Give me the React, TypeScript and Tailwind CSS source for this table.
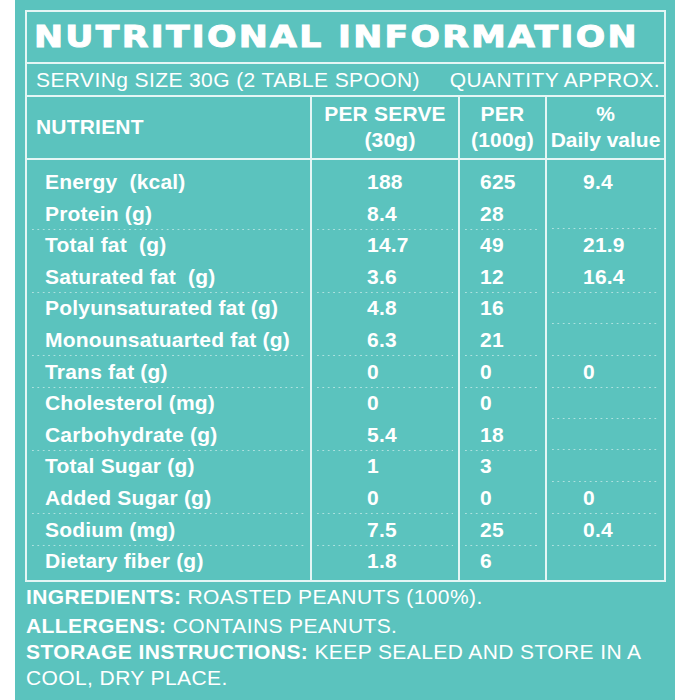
import React from "react";

type Row = { name: string; serve: string; per100: string; dv: string };

const rows: Row[] = [
  { name: "Energy  (kcal)", serve: "188", per100: "625", dv: "9.4" },
  { name: "Protein (g)", serve: "8.4", per100: "28", dv: "" },
  { name: "Total fat  (g)", serve: "14.7", per100: "49", dv: "21.9" },
  { name: "Saturated fat  (g)", serve: "3.6", per100: "12", dv: "16.4" },
  { name: "Polyunsaturated fat (g)", serve: "4.8", per100: "16", dv: "" },
  { name: "Monounsatuarted fat (g)", serve: "6.3", per100: "21", dv: "" },
  { name: "Trans fat (g)", serve: "0", per100: "0", dv: "0" },
  { name: "Cholesterol (mg)", serve: "0", per100: "0", dv: "" },
  { name: "Carbohydrate (g)", serve: "5.4", per100: "18", dv: "" },
  { name: "Total Sugar (g)", serve: "1", per100: "3", dv: "" },
  { name: "Added Sugar (g)", serve: "0", per100: "0", dv: "0" },
  { name: "Sodium (mg)", serve: "7.5", per100: "25", dv: "0.4" },
  { name: "Dietary fiber (g)", serve: "1.8", per100: "6", dv: "" },
];

function Dots() {
  return (
    <div className="h-px mx-[5px] bg-[linear-gradient(to_right,rgba(255,255,255,0.5)_1.5px,transparent_1.5px)] bg-[length:5.4px_1px] bg-repeat-x" />
  );
}

function Cell({
  children,
  width,
  pad,
  first,
  last,
  border,
}: {
  children: React.ReactNode;
  width: string;
  pad: string;
  first: boolean;
  last: boolean;
  border: boolean;
}) {
  return (
    <div
      className={
        "flex flex-col " +
        (border ? "border-l-2 border-[#e4f6f5] " : "") +
        (first ? "pt-[6px] " : "") +
        (last ? "pb-[3px] " : "") +
        width
      }
    >
      <div className={"flex-1 flex items-center whitespace-pre " + pad}>{children}</div>
      {last ? null : <Dots />}
    </div>
  );
}

export default function App() {
  return (
    <div className="w-[690px] h-[700px] bg-white">
      <div className="ml-[15px] w-[660px] h-[700px] bg-[#5bc3be] pt-[10px] pl-[10px] text-white font-['Liberation_Sans',Arial,sans-serif]">
        <div className="w-[641px] border-2 border-[#e4f6f5]">
          {/* Title */}
          <div className="h-[52px] border-b-2 border-[#e4f6f5] flex items-center pl-[7px]">
            <h1 className="origin-left scale-x-[1.155] font-['DejaVu_Sans',sans-serif] font-bold text-[30px] leading-none tracking-[2px] whitespace-nowrap [-webkit-text-stroke:1px_white]">
              NUTRITIONAL INFORMATION
            </h1>
          </div>
          {/* Serving */}
          <div className="h-[33px] border-b-2 border-[#e4f6f5] flex items-center pl-[9px] pr-[4px] justify-between text-[21px] tracking-[0.4px] whitespace-nowrap">
            <span>SERVINg SIZE 30G (2 TABLE SPOON)</span>
            <span>QUANTITY APPROX.</span>
          </div>
          {/* Header */}
          <div className="flex h-[63px] border-b-2 border-[#e4f6f5] font-bold text-[21px] leading-[26px] tracking-[0.2px]">
            <div className="w-[283px] pt-[17px] pl-[9px]">NUTRIENT</div>
            <div className="w-[148px] border-l-2 border-[#e4f6f5] pt-[4px] text-center whitespace-nowrap">
              <div>PER SERVE</div>
              <div className="pl-[10px]">(30g)</div>
            </div>
            <div className="w-[87px] border-l-2 border-[#e4f6f5] pt-[4px] text-center whitespace-nowrap">
              <div>PER</div>
              <div>(100g)</div>
            </div>
            <div className="w-[119px] border-l-2 border-[#e4f6f5] pt-[4px] text-center whitespace-nowrap tracking-normal">
              <div>%</div>
              <div>Daily value</div>
            </div>
          </div>
          {/* Body */}
          <div className="font-bold text-[21px] tracking-[0.2px]">
            {rows.map((r, i) => {
              const first = i === 0;
              const last = i === rows.length - 1;
              return (
                <div
                  key={r.name}
                  className={
                    "flex " +
                    (first ? "h-[37.6px]" : last ? "h-[34.6px]" : "h-[31.6px]")
                  }
                >
                  <Cell width="w-[283px]" pad="pl-[18px]" first={first} last={last} border={false}>
                    {r.name}
                  </Cell>
                  <Cell width="w-[148px]" pad="pl-[55px]" first={first} last={last} border>
                    {r.serve}
                  </Cell>
                  <Cell width="w-[87px]" pad="pl-[20px]" first={first} last={last} border>
                    {r.per100}
                  </Cell>
                  <Cell width="w-[119px]" pad="pl-[36px]" first={first} last={last} border>
                    {r.dv}
                  </Cell>
                </div>
              );
            })}
          </div>
        </div>
        {/* Footer */}
        <div className="mt-[2px] pl-[1px] text-[21px] leading-[26px] tracking-[0.4px] whitespace-nowrap">
          <p className="mb-[3px]">
            <span className="font-bold">INGREDIENTS:</span> ROASTED PEANUTS (100%).
          </p>
          <p>
            <span className="font-bold">ALLERGENS:</span> CONTAINS PEANUTS.
          </p>
          <p>
            <span className="font-bold">STORAGE INSTRUCTIONS:</span> KEEP SEALED AND STORE IN A
            <br />
            COOL, DRY PLACE.
          </p>
        </div>
      </div>
    </div>
  );
}
